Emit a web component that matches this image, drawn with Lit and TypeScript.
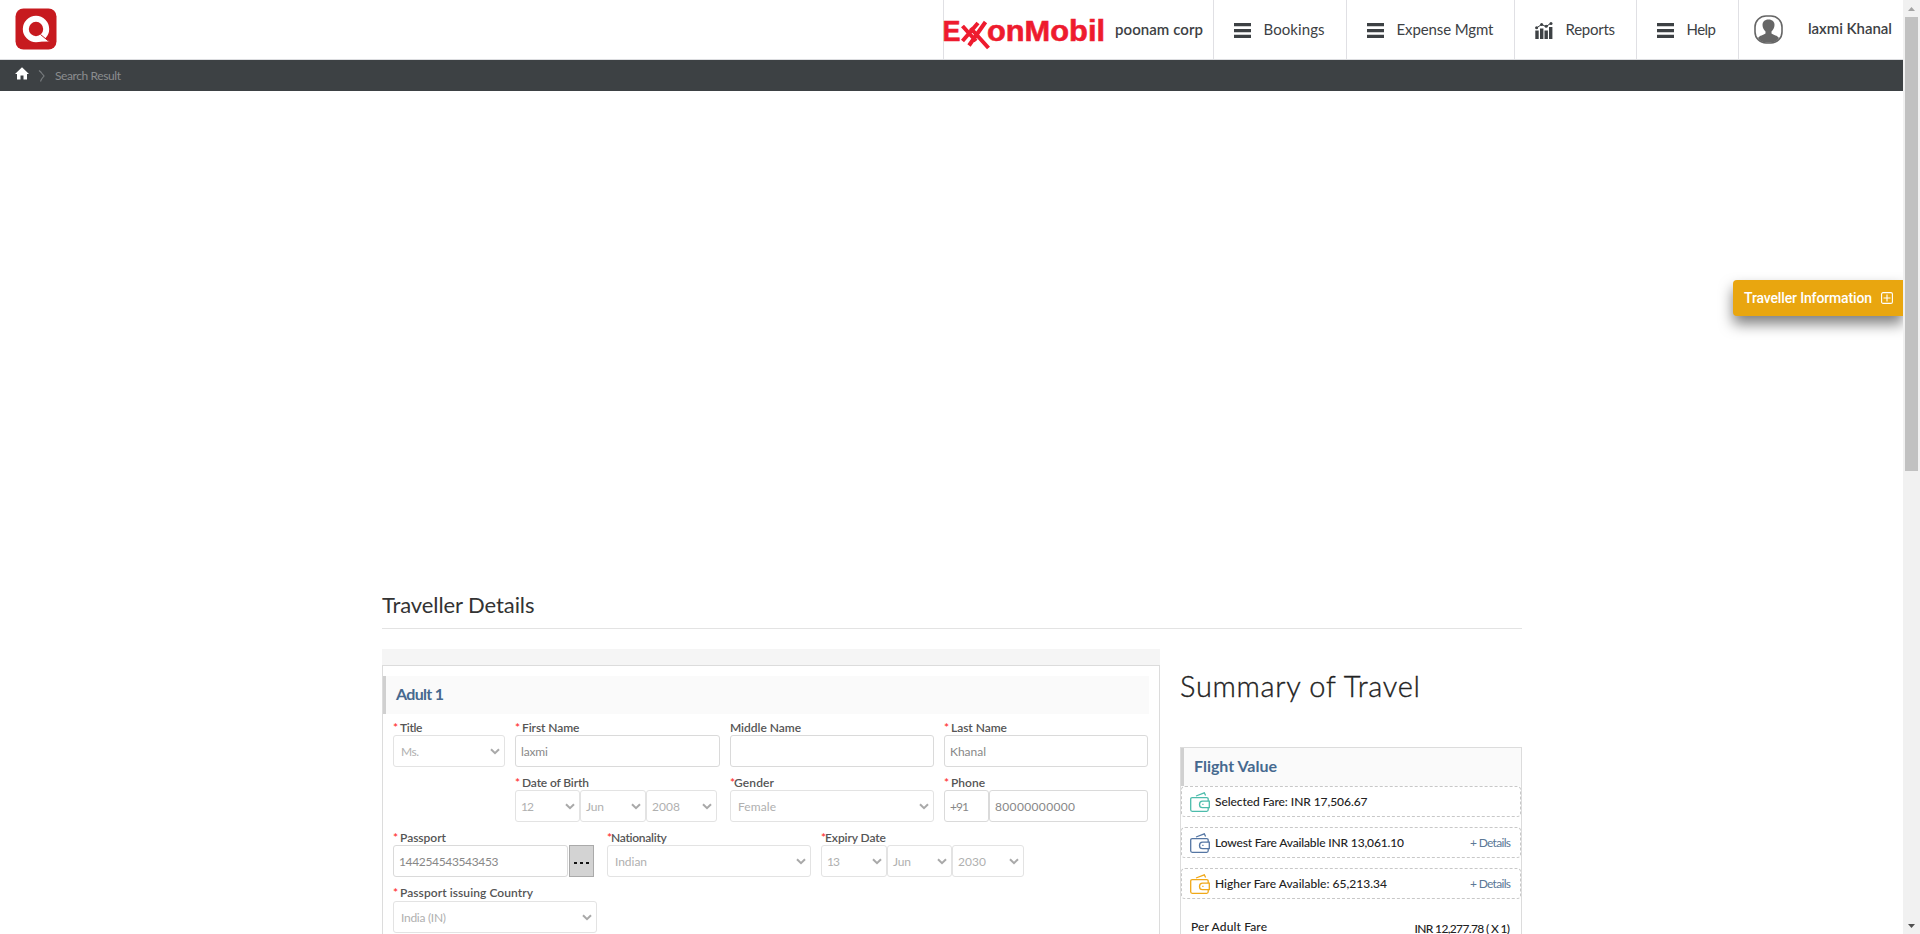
import { LitElement, html, css, svg, nothing } from "lit";
import { customElement, property } from "lit/decorators.js";

/** A run of text tracked so that it fills a given advance width. */
@customElement("fit-text")
class FitText extends LitElement {
  @property() text = "";
  @property({ type: Number }) w = 0;
  static styles = css`
    :host { display: inline-block; white-space: pre; }
  `;
  updated() {
    this.style.letterSpacing = "0px";
    const natural = this.getBoundingClientRect().width;
    const gap = (this.w - natural) / Math.max(1, this.text.length - 1);
    this.style.letterSpacing = gap.toFixed(3) + "px";
    this.style.marginRight = (-gap).toFixed(3) + "px";
  }
  render() { return html`${this.text}`; }
}

const t = (text: string, w: number) => html`<fit-text .text=${text} .w=${w}></fit-text>`;

const bars = html`<svg width="17" height="15" viewBox="0 0 17 15" fill="#3d4144"><path d="M0 0h17v3.3H0zM0 6h17v3.3H0zM0 11.7h17V15H0z"/></svg>`;
const chart = html`<svg width="18" height="17" viewBox="0 0 18 17" fill="#3d4144"><path d="M.3 8.5h3.4V17H.3zM5 6.5h3.4V17H5zM9.5 8.5h3.4V17H9.5zM14 5h3.4v12H14z"/><path d="M1.5 6 6.5 2.5 11 4.5 16 1.2" fill="none" stroke="#3d4144" stroke-width="1"/><circle cx="1.6" cy="5.8" r="1.5"/><circle cx="6.6" cy="2.5" r="1.5"/><circle cx="11.2" cy="4.3" r="1.5"/><circle cx="16" cy="1.6" r="1.5"/></svg>`;
const arrow = html`<svg class="arrow" width="10" height="7" viewBox="0 0 10 7"><path d="M1 1.2 5 5.2 9 1.2" fill="none" stroke="#a9a9a9" stroke-width="2"/></svg>`;
const wallet = (c: string) => svg`<svg width="20" height="20" viewBox="0 0 20 20" fill="none" stroke=${c} stroke-width="1.3"><path d="M18.2 9V7.2Q18.2 5.7 16.7 5.7H2.2Q.7 5.7 .7 7.2v10.6q0 1.5 1.5 1.5h14.5q1.500 0 1.500-1.500V16"/><path d="M19.3 9.2h-6.800q-3 0-3 3.200t3 3.200h6.800z"/><path d="M6 4 14.3.8 15.6 3.6"/><path d="M12.3 12.4h1.2"/></svg>`;

const nav: [string, number, unknown, string][] = [
  ["Bookings", 61, bars, "n1"], ["Expense Mgmt", 97, bars, "n2"],
  ["Reports", 49.5, chart, "n3"], ["Help", 29.5, bars, "n4"],
];

@customElement("app-root")
class AppRoot extends LitElement {
  static styles = css`
    :host { display: flex; width: 1920px; height: 934px; overflow: hidden; background: #fff; font-family: Lato, "Open Sans", sans-serif; font-size: 12px; color: #333; }
    * { box-sizing: border-box; }
    svg { display: block; flex: none; }
    .page { width: 1903px; position: relative; overflow: hidden; flex: none; }
    .scroll { width: 17px; background: #f1f1f1; display: flex; flex-direction: column; justify-content: space-between; align-items: center; }
    .scroll .thumb { width: 13px; height: 454px; background: #c1c1c1; margin-bottom: 446px; }
    .scroll .cap { height: 17px; display: flex; align-items: center; }
    header { height: 60px; border-bottom: 1px solid #dcdde0; display: flex; padding-left: 15px; }
    .logo { margin-top: 8px; }
    .right { margin-left: auto; display: flex; height: 59px; }
    .cell { border-left: 1px solid #e0e0e4; display: flex; align-items: center; font-size: 15px; color: #3d4144; }
    .brand { width: 270px; }
    .brand svg { overflow: visible; }
    .brand fit-text { margin-left: 10px; font-weight: 600; padding-bottom: 2px; }
    .item { padding-left: 20px; gap: 13px; padding-top: 2px; }
    .item fit-text { padding-bottom: 3px; margin-left: -0.5px; }
    .n1 { width: 133px; } .n2 { width: 168px; } .n3 { width: 122px; } .n4 { width: 102px; }
    .user { width: 165px; padding-left: 15px; gap: 25px; font-weight: 600; }
    .user fit-text { padding-bottom: 3px; }
    .crumbs { height: 31px; background: #3d4144; display: flex; align-items: center; padding-left: 15px; color: #8b8d8f; }
    .crumbs .sep { margin: 0 9px 0 9px; }
    .home { margin-top: -4px; }
    .float { position: absolute; right: 0; top: 280px; width: 170px; height: 36px; border-radius: 4px 0 0 4px; background: #e9a60f; color: #fff; box-shadow: 0 8px 14px rgba(0,0,0,.5); display: flex; align-items: center; padding-left: 11px; gap: 9px; font: 500 14px Roboto, sans-serif; }
    main { width: 1140px; margin: 493px 0 0 382px; }
    h1 { margin: 0; height: 45px; border-bottom: 1px solid #e3e3e3; font-size: 22px; line-height: 42px; font-weight: 400; color: #333; }
    .cols { display: flex; gap: 20px; margin-top: 20px; }
    .left { width: 778px; }
    .strip { height: 16px; background: #f5f5f5; }
    .card { border: 1px solid #dcdcdc; height: 300px; padding-top: 10px; }
    .bar { height: 38px; background: #fafafa; border-left: 3px solid #d0d0d0; color: #46698f; font-size: 16px; font-weight: 700; line-height: 36px; padding-left: 10px; }
    .card .bar { width: 766px; }
    .row { display: flex; padding-left: 10px; height: 55px; gap: 10px; }
    .first { margin-top: 3px; }
    label { display: block; height: 18px; line-height: 21px; font-weight: 600; color: #555; white-space: nowrap; }
    label i { font-style: normal; color: #f33; display: inline-block; width: 7px; }
    label i.tight { width: 4px; }
    .group { display: flex; }
    .ctl { height: 32px; border: 1px solid #dadada; border-radius: 3px; display: flex; align-items: center; padding-left: 5px; color: #888; }
    .ctl.sel { border-color: #e3e3e3; color: #b0b0b0; padding-left: 7px; }
    .ctl.narrow { padding-left: 5px; }
    .arrow { margin-left: auto; margin-right: 4px; }
    .w112 { width: 112px; } .w205 { width: 205px; } .w204 { width: 204px; }
    .w65 { width: 65px; } .w66 { width: 66px; } .w71 { width: 71px; } .w72 { width: 72px; }
    .w45 { width: 45px; } .w159 { width: 159px; } .w175 { width: 175px; }
    .dob { margin-left: 122px; width: 205px; }
    .dots { width: 25px; height: 32px; margin-left: 1px; border: 1px solid #aaa; background: #d3d3d3; display: flex; justify-content: center; align-items: center; gap: 3px; padding-top: 4px; }
    .dots b { width: 3px; height: 2px; background: #111; }
    .last label { height: 19px; }
    .summary { width: 342px; }
    h2 { margin: 20px 0 0 0; height: 78px; font-size: 29px; line-height: 34px; font-weight: 300; color: #222; -webkit-text-stroke: 0.35px #222; }
    .value { border: 1px solid #dcdcdc; height: 200px; }
    .fare { height: 31px; border: 1px dashed #c8c8c8; border-radius: 4px; margin-bottom: 10px; display: flex; align-items: center; padding: 0 9px 0 8px; color: #222; font-weight: 500; }
    .fare fit-text { margin-left: 5px; }
    .fare .more { margin-left: auto; color: #5b7896; font-weight: 400; }
    .per { display: flex; justify-content: space-between; padding: 10px 11px 0 10px; color: #222; font-weight: 500; }
    .per .amt { margin-top: 2px; }
  `;

  sel(w: string, text: string, tw: number, narrow = false) {
    return html`<div class="ctl sel ${w} ${narrow ? "narrow" : ""}">${t(text, tw)}${arrow}</div>`;
  }
  inp(w: string, text: string, tw: number) {
    return html`<div class="ctl ${w}">${text ? t(text, tw) : nothing}</div>`;
  }
  lab(star: string, text: string, w: number) {
    return html`<label>${star ? html`<i class=${star}>*</i>` : nothing}${t(text, w)}</label>`;
  }

  render() {
    return html`
      <div class="page">
        <header>
          <svg class="logo" width="42" height="42" viewBox="0 0 42 42"><rect x=".5" y=".5" width="41" height="41" rx="8" fill="#c71a1f"/><circle cx="21" cy="21" r="10.2" fill="none" stroke="#fff" stroke-width="6"/><path d="M25 27 34.5 33.5 20 33.8z" fill="#fff"/><path d="M25.5 26.5 34 33.5" stroke="#c71a1f" stroke-width="1"/></svg>
          <div class="right">
            <div class="cell brand">
              <svg width="161" height="44" viewBox="0 0 161 44" font-family="Liberation Sans" font-weight="700" fill="#ee1b2e" stroke="#ee1b2e" stroke-width=".6" font-size="30">
                <text x="-1.500" y="33" textLength="18" lengthAdjust="spacingAndGlyphs">E</text>
                <text x="43" y="33" textLength="118" lengthAdjust="spacingAndGlyphs">onMobil</text>
                <g fill="none" stroke-width="4"><path d="M18.500 18 32 33M34 15 18.500 33M26.500 20 44.500 40M41.500 14 25 37.500"/></g>
              </svg>
              ${t("poonam corp", 88)}
            </div>
            ${nav.map(([s, w, icon, c]) => html`<div class="cell item ${c}">${icon}${t(s, w)}</div>`)}
            <div class="cell user">
              <svg width="29" height="29" viewBox="0 0 29 29"><rect x="1" y="1" width="27" height="27" rx="11" fill="#fff" stroke="#666" stroke-width="1.6"/><path d="M14.500 4.500c4 0 6 2.400 6 5.500s-1.500 5-3 6.500v2c2 1.500 6 2 7.500 4.500-2 3.500-5 4.500-10.500 4.500S6 26.500 4 23c1.500-2.500 5.500-3 7.500-4.500v-2c-1.500-1.500-3-3.400-3-6.500s2-5.500 6-5.500z" fill="#666"/></svg>
              ${t("laxmi Khanal", 84)}
            </div>
          </div>
        </header>
        <div class="crumbs">
          <svg class="home" width="14" height="13" viewBox="0 0 14 13" fill="#fff"><path d="M7 .3 14 7H12v5.500H8.500V8.500h-3V12.500H2V7H0z"/></svg>
          <svg class="sep" width="8" height="12" viewBox="0 0 8 12"><path d="M1 .5q2 1.500 3 3l2 2.500-2 2.500q-1 1.500-1.500 3" fill="none" stroke="#777b7e" stroke-width="1.2"/></svg>
          ${t("Search Result", 66)}
        </div>
        <div class="float">${t("Traveller Information", 128)}
          <svg width="12" height="12" viewBox="0 0 12 12" fill="none" stroke="#fff" stroke-width="1.1"><rect x=".6" y=".6" width="10.800" height="10.800" rx="1.500"/><path d="M6 2.500v7M2.500 6h7"/></svg>
        </div>
        <main>
          <h1>${t("Traveller Details", 152.5)}</h1>
          <div class="cols">
            <section class="left">
              <div class="strip"></div>
              <div class="card">
                <div class="bar">${t("Adult 1", 48)}</div>
                <div class="row first">
                  <div>${this.lab("s", "Title", 22.5)}${this.sel("w112", "Ms.", 18)}</div>
                  <div>${this.lab("s", "First Name", 57.5)}${this.inp("w205", "laxmi", 27)}</div>
                  <div>${this.lab("", "Middle Name", 71)}${this.inp("w204", "", 0)}</div>
                  <div>${this.lab("s", "Last Name", 56)}${this.inp("w204", "Khanal", 36)}</div>
                </div>
                <div class="row">
                  <div class="dob">${this.lab("s", "Date of Birth", 67)}<div class="group">${this.sel("w65", "12", 13, true)}${this.sel("w66", "Jun", 18, true)}${this.sel("w71", "2008", 28, true)}</div></div>
                  <div>${this.lab("tight", "Gender", 40)}${this.sel("w204", "Female", 38)}</div>
                  <div>${this.lab("s", "Phone", 34)}<div class="group">${this.inp("w45", "+91", 19)}${this.inp("w159", "80000000000", 80)}</div></div>
                </div>
                <div class="row">
                  <div class="w204">${this.lab("s", "Passport", 46)}<div class="group">${this.inp("w175", "144254543543453", 99.5)}<div class="dots"><b></b><b></b><b></b></div></div></div>
                  <div>${this.lab("tight", "Nationality", 56)}${this.sel("w204", "Indian", 32)}</div>
                  <div>${this.lab("tight", "Expiry Date", 61)}<div class="group">${this.sel("w66", "13", 13, true)}${this.sel("w65", "Jun", 18, true)}${this.sel("w72", "2030", 28, true)}</div></div>
                </div>
                <div class="row last">
                  <div>${this.lab("s", "Passport issuing Country", 133)}${this.sel("w204", "India (IN)", 45)}</div>
                </div>
              </div>
            </section>
            <section class="summary">
              <h2>${t("Summary of Travel", 240)}</h2>
              <div class="value">
                <div class="bar">${t("Flight Value", 83)}</div>
                <div class="fare">${wallet("#4cbcab")}${t("Selected Fare: INR 17,506.67", 152.5)}</div>
                <div class="fare">${wallet("#5576a3")}${t("Lowest Fare Available INR 13,061.10", 189)}<span class="more">${t("+ Details", 41)}</span></div>
                <div class="fare">${wallet("#f0a818")}${t("Higher Fare Available: 65,213.34", 172)}<span class="more">${t("+ Details", 41)}</span></div>
                <div class="per"><span>${t("Per Adult Fare", 76)}</span><span class="amt">${t("INR 12,277.78 ( X 1)", 95.5)}</span></div>
              </div>
            </section>
          </div>
        </main>
      </div>
      <div class="scroll">
        <div class="cap"><svg width="7" height="4" viewBox="0 0 7 4"><path d="M0 4 3.500 0 7 4z" fill="#a3a3a3"/></svg></div>
        <div class="thumb"></div>
        <div class="cap"><svg width="7" height="4" viewBox="0 0 7 4"><path d="M0 0h7L3.500 4z" fill="#505050"/></svg></div>
      </div>`;
  }
}
